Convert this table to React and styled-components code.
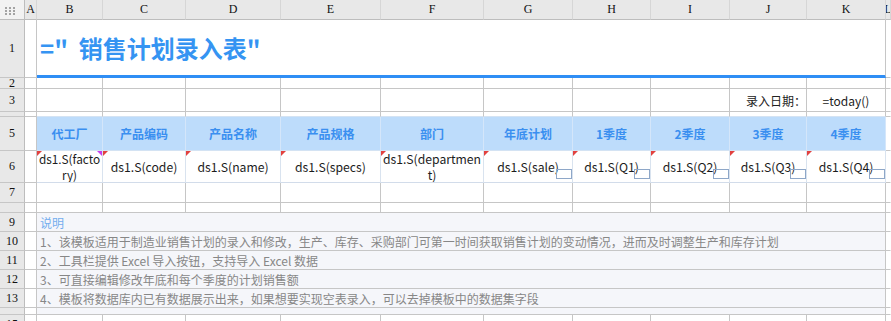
import React from 'react'
import styled, { createGlobalStyle, css } from 'styled-components'

const GlobalStyle = createGlobalStyle`
    html, body {
        margin: 0;
        padding: 0;
        background: #fff;
        overflow: hidden;
    }
`

const COLS = ['A', 'B', 'C', 'D', 'E', 'F', 'G', 'H', 'I', 'J', 'K']
const WIDTHS = [12, 66, 83, 95, 100, 103, 89, 78, 79, 77, 79]

const ROWS = [
    { n: 1, h: 58, kind: 'title' },
    { n: 2, h: 11 },
    { n: 3, h: 23, kind: 'date' },
    { n: 4, h: 5, kind: 'gap', noLabel: true },
    { n: 5, h: 34, kind: 'head' },
    { n: 6, h: 32, kind: 'data' },
    { n: 7, h: 20 },
    { n: 8, h: 10, noLabel: true },
    { n: 9, h: 19, kind: 'note', text: '说明', accent: true },
    { n: 10, h: 19, kind: 'note', text: '1、该模板适用于制造业销售计划的录入和修改，生产、库存、采购部门可第一时间获取销售计划的变动情况，进而及时调整生产和库存计划' },
    { n: 11, h: 19, kind: 'note', text: '2、工具栏提供 Excel 导入按钮，支持导入 Excel 数据' },
    { n: 12, h: 19, kind: 'note', text: '3、可直接编辑修改年底和每个季度的计划销售额' },
    { n: 13, h: 19, kind: 'note', text: '4、模板将数据库内已有数据展示出来，如果想要实现空表录入，可以去掉模板中的数据集字段' },
    { n: 14, h: 7, kind: 'note', text: '', noLabel: true },
    { n: 15, h: 20 }
]

const HEADS = ['代工厂', '产品编码', '产品名称', '产品规格', '部门', '年底计划', '1季度', '2季度', '3季度', '4季度']
const FIELDS = ['factory', 'code', 'name', 'specs', 'department', 'sale', 'Q1', 'Q2', 'Q3', 'Q4']

const Sheet = styled.div`
    display: grid;
    grid-template-columns: 25px ${WIDTHS.map(w => w + 'px').join(' ')} 1fr;
    grid-template-rows: 20px ${ROWS.map(r => r.h + 'px').join(' ')};
    width: 100vw;
    font-family: "Noto Sans CJK SC", "Noto Sans", sans-serif;
`

const Corner = styled.div`
    box-sizing: border-box;
    background: #f2f2f2;
    border-right: 1px solid #bdbdbd;
    border-bottom: 1px solid #bdbdbd;
    padding: 7px 0 0 5px;
    svg { display: block; }
`

const HeadBase = css`
    box-sizing: border-box;
    background: #e8e8e8;
    color: #111;
    font-family: "Liberation Serif", "DejaVu Serif", serif;
    font-size: 12px;
    display: flex;
    align-items: center;
    justify-content: center;
    overflow: hidden;
    white-space: nowrap;
`

const ColHead = styled.div`
    ${HeadBase};
    border-right: 1px solid #d6d6d6;
    border-bottom: 1px solid #bdbdbd;
`

const RowHead = styled.div`
    ${HeadBase};
    border-right: 1px solid #bdbdbd;
    border-bottom: 1px solid #c6c6c6;
    align-items: ${p => (p.$top ? 'flex-start' : 'center')};
    padding-top: ${p => (p.$top ? '2px' : '0')};
`

const Cell = styled.div`
    box-sizing: border-box;
    position: relative;
    background: #fff;
    border-right: 1px solid ${p => p.$vline || '#c6c6c6'};
    border-bottom: 1px solid ${p => p.$hline || '#c6c6c6'};
    font-size: 12px;
    color: #222;
    display: flex;
    align-items: center;
    justify-content: ${p => p.$align || 'center'};
    overflow: hidden;
    white-space: nowrap;
`

const TitleCell = styled.div`
    grid-column: span 10;
    box-sizing: border-box;
    border-right: 1px solid #c6c6c6;
    border-bottom: 3px solid #2f8ef5;
    display: flex;
    align-items: center;
    padding-left: 3px;
    color: #3594f2;
    font-size: 24px;
    font-weight: 700;
    white-space: pre;
`

const HeadCell = styled(Cell)`
    background: #bddcfb;
    color: #3a8ff0;
    font-weight: 700;
    font-size: 12px;
`

const DataCell = styled(Cell)`
    font-size: ${p => (p.$narrow ? '11.8px' : '12.2px')};
    color: #1c1c1c;
    white-space: normal;
    word-break: break-all;
    text-align: center;
    line-height: 16px;
    padding: 0 ${p => (p.$narrow ? 0 : 1)}px;

    &::before {
        content: '';
        position: absolute;
        top: 0;
        left: 0;
        border-top: 5px solid #e2413f;
        border-right: 5px solid transparent;
    }
`

const PurpleMark = styled.span`
    position: absolute;
    top: 0;
    right: 0;
    border-top: 5px solid #c43ff0;
    border-left: 5px solid transparent;
`

const EditBox = styled.span`
    position: absolute;
    right: 0;
    bottom: 3px;
    width: 16px;
    height: 10px;
    box-sizing: border-box;
    border: 1px solid #8ea7c8;
`

const NoteCell = styled.div`
    grid-column: span 10;
    box-sizing: border-box;
    background: #f5f6fa;
    border-right: 1px solid #c6c6c6;
    border-bottom: 1px solid #c6c6c6;
    display: flex;
    align-items: center;
    padding-left: 3px;
    font-size: 12px;
    color: ${p => (p.$accent ? '#73adee' : '#878787')};
    white-space: nowrap;
    overflow: hidden;
`

const DotsIcon = () => (
    <svg width="12" height="10" viewBox="0 0 12 10">
        {[0, 1, 2].map(r =>
            [0, 1, 2].map(c => (
                <rect key={`${r}${c}`} x={c * 4} y={r * 3} width="2" height="2" fill="#a3a3a3" />
            ))
        )}
    </svg>
)

const renderRow = row => {
    const label = (
        <RowHead key={`h${row.n}`} $top={row.n === 15}>
            {row.noLabel ? '' : row.n}
        </RowHead>
    )
    const colA = <Cell key={`a${row.n}`} />
    const colL = <Cell key={`l${row.n}`} $vline="transparent" />

    if (row.kind === 'title') {
        return [label, colA, <TitleCell key="title">{'="  销售计划录入表"'}</TitleCell>, colL]
    }
    if (row.kind === 'note') {
        return [
            label,
            colA,
            <NoteCell key={`n${row.n}`} $accent={row.accent}>{row.text}</NoteCell>,
            colL
        ]
    }
    const cells = COLS.slice(1).map((c, i) => {
        const key = `${c}${row.n}`
        if (row.kind === 'head') {
            return <HeadCell key={key} $vline="#d4e6fa" $hline="#d4e3f3">{HEADS[i]}</HeadCell>
        }
        if (row.kind === 'data') {
            return (
                <DataCell key={key} $vline="#d9e3ef" $hline="#d2dcea" $narrow={i === 0}>
                    {`ds1.S(${FIELDS[i]})`}
                    {i === 0 && <PurpleMark />}
                    {i >= 5 && <EditBox />}
                </DataCell>
            )
        }
        if (row.kind === 'gap') {
            return <Cell key={key} $hline="#d4e3f3" />
        }
        if (row.kind === 'date' && c === 'J') {
            return <Cell key={key} $align="flex-end">录入日期：</Cell>
        }
        if (row.kind === 'date' && c === 'K') {
            return <Cell key={key}>=today()</Cell>
        }
        return <Cell key={key} />
    })
    return [label, colA, ...cells, colL]
}

const App = () => (
    <>
        <GlobalStyle />
        <Sheet>
            <Corner>
                <DotsIcon />
            </Corner>
            {COLS.map(c => (
                <ColHead key={c}>{c}</ColHead>
            ))}
            <ColHead>L</ColHead>
            {ROWS.map(renderRow)}
        </Sheet>
    </>
)

export default App
